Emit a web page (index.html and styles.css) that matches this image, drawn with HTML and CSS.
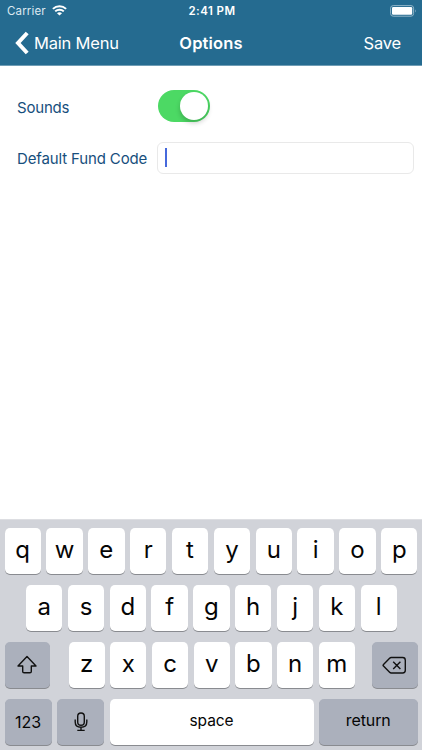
FILE: index.html
```html
<!DOCTYPE html>
<html lang="en">
<head>
<meta charset="utf-8">
<title>Options</title>
<link rel="stylesheet" href="styles.css">
</head>
<body>
<div class="screen">
  <header class="header">
    <div class="status">
      <div class="carrier"><span>Carrier</span>
        <svg class="wifi" width="15" height="11" viewBox="0 0 15 11"><path d="M.9 3.9C4.7.2 10.3.2 14.1 3.9M3.2 6.4C5.6 4.1 9.4 4.1 11.8 6.4" fill="none" stroke="#fff" stroke-width="2"/><path d="M5 8.2C6.4 6.9 8.6 6.9 10 8.2L7.5 10.6Z" fill="#fff"/></svg>
      </div>
      <div class="time">2:41 PM</div>
      <svg class="battery" width="27" height="12" viewBox="0 0 27 12"><rect x=".6" y=".6" width="23" height="10.6" rx="2.6" fill="none" stroke="#91b5c8"/><rect x="2" y="2" width="20.2" height="7.8" rx="1.2" fill="#fff"/><path d="M25 4.2Q26.6 5.9 25 7.6Z" fill="#91b5c8"/></svg>
    </div>
    <nav class="nav">
      <div class="back"><svg width="14" height="24" viewBox="0 0 14 24"><path d="M12.2 2L3 12L12.2 22" fill="none" stroke="#fff" stroke-width="4"/></svg><span>Main Menu</span></div>
      <h1 class="title">Options</h1>
      <div class="save">Save</div>
    </nav>
  </header>
  <main class="form">
    <div class="label sounds">Sounds</div>
    <div class="switch"><div class="knob"></div></div>
    <div class="label fund">Default Fund Code</div>
    <div class="input"><div class="caret"></div></div>
  </main>
  <section class="keyboard">
    <div class="row">
      <div class="key">q</div><div class="key">w</div><div class="key">e</div><div class="key">r</div><div class="key">t</div><div class="key">y</div><div class="key">u</div><div class="key">i</div><div class="key">o</div><div class="key">p</div>
    </div>
    <div class="row home">
      <div class="key">a</div><div class="key">s</div><div class="key">d</div><div class="key">f</div><div class="key">g</div><div class="key">h</div><div class="key">j</div><div class="key">k</div><div class="key">l</div>
    </div>
    <div class="row lower">
      <div class="key dark side"><svg width="22" height="20" viewBox="0 0 22 20"><path d="M11 1.5L20 11H15.3V16.4Q15.3 17.8 13.9 17.8H8.1Q6.7 17.8 6.7 16.4V11H2Z" fill="none" stroke="#111" stroke-width="1.4" stroke-linejoin="round"/></svg></div>
      <div class="letters"><div class="key">z</div><div class="key">x</div><div class="key">c</div><div class="key">v</div><div class="key">b</div><div class="key">n</div><div class="key">m</div></div>
      <div class="key dark side"><svg width="25" height="19" viewBox="0 0 25 19"><path d="M9.2 1.5H20.6Q23.3 1.5 23.3 4.2V14.3Q23.3 17 20.6 17H9.2Q8.3 17 7.6 16.3L1.5 10.1Q.7 9.2 1.5 8.4L7.6 2.2Q8.3 1.5 9.2 1.5Z M11.2 5.7L18.4 12.9M18.4 5.7L11.2 12.9" fill="none" stroke="#111" stroke-width="1.4" stroke-linejoin="round"/></svg></div>
    </div>
    <div class="row bottom">
      <div class="key dark small numbers">123</div>
      <div class="key dark small"><svg width="14" height="20" viewBox="0 0 14 20"><rect x="3.7" y="1" width="6.6" height="12.2" rx="3.3" fill="none" stroke="#111" stroke-width="1.4"/><path d="M1.2 7.5V10Q1.2 15.2 7 15.2T12.8 10V7.5M7 15.2V18.4M3.3 18.4H10.7" fill="none" stroke="#111" stroke-width="1.4"/></svg></div>
      <div class="key space">space</div>
      <div class="key dark return">return</div>
    </div>
  </section>
</div>
</body>
</html>
```
FILE: styles.css
```css
* { box-sizing: border-box; }
body { margin: 0; font-family: Inter, sans-serif; }
.screen { width: 422px; height: 750px; display: flex; flex-direction: column; background: #fff; overflow: hidden; }
.header { height: 66px; flex: none; background: #256b90; border-bottom: 1px solid #6f9db5; color: #fff; }
.status { height: 22px; padding: 0 5px 0 7px; display: grid; grid-template-columns: 1fr auto 1fr; align-items: center; font-size: 11.5px; }
.carrier { display: flex; align-items: center; gap: 6px; color: #dce9f0; letter-spacing: .15px; }
.wifi { margin-bottom: 1px; }
.time { font-weight: 600; font-size: 11.5px; letter-spacing: .45px; }
.battery { justify-self: end; margin-bottom: 1px; }
.nav { height: 42px; padding: 0 21px 0 15px; display: grid; grid-template-columns: 1fr auto 1fr; align-items: center; font-size: 16.5px; }
.back { display: flex; align-items: center; gap: 5px; letter-spacing: -.2px; }
.title { margin: 0 0 0 6px; font-size: 16.5px; font-weight: 600; letter-spacing: .15px; }
.save { justify-self: end; letter-spacing: -.2px; }
.form { flex: 1; padding: 24px 8px 0 17px; display: grid; grid-template-columns: 140px 1fr; grid-template-rows: 32px 32px; row-gap: 20px; align-content: start; align-items: center; }
.label { color: #174f7d; font-size: 15px; letter-spacing: -.14px; white-space: nowrap; }
.sounds { padding-top: 2px; letter-spacing: -.2px; }
.switch { width: 52px; height: 32px; margin-left: 1px; border-radius: 16px; background: #4cd964; padding: 2px; display: flex; justify-content: flex-end; }
.knob { width: 28px; height: 28px; border-radius: 50%; background: #fff; box-shadow: 0 3px 5px rgba(0,0,0,.2); }
.input { height: 32px; border: 1px solid #e9e9e9; border-radius: 6px; padding: 5px 6.5px; }
.caret { width: 2px; height: 19px; background: #4669dc; }
.keyboard { height: 231px; flex: none; background: #d1d3d9; border-top: 1px solid #dddee2; padding: 8px 4.5px 0; display: flex; flex-direction: column; gap: 11px; }
.row, .letters { display: flex; gap: 5.5px; }
.row { height: 46px; flex: none; }
.home { padding: 0 20.7px 0 21.5px; }
.lower { justify-content: space-between; }
.key { flex: 1 1 0; height: 46px; border-radius: 5px; background: #fff; box-shadow: 0 1px 0 #898b90; color: #050505; font-size: 24px; font-weight: 400; display: flex; align-items: center; justify-content: center; padding-bottom: 4px; }
.letters { margin-left: 1.5px; }
.letters .key { flex: 0 0 36.2px; }
.key.dark { background: #abb0bc; padding: 0; }
.key.side { flex: 0 0 45.5px; }
.key.small { flex: 0 0 47px; }
.key.numbers { font-size: 16px; }
.key.space { font-size: 15.5px; letter-spacing: -.1px; }
.key.return { flex: 0 0 98.5px; font-size: 16px; letter-spacing: -.1px; padding-bottom: 4px; }
```
